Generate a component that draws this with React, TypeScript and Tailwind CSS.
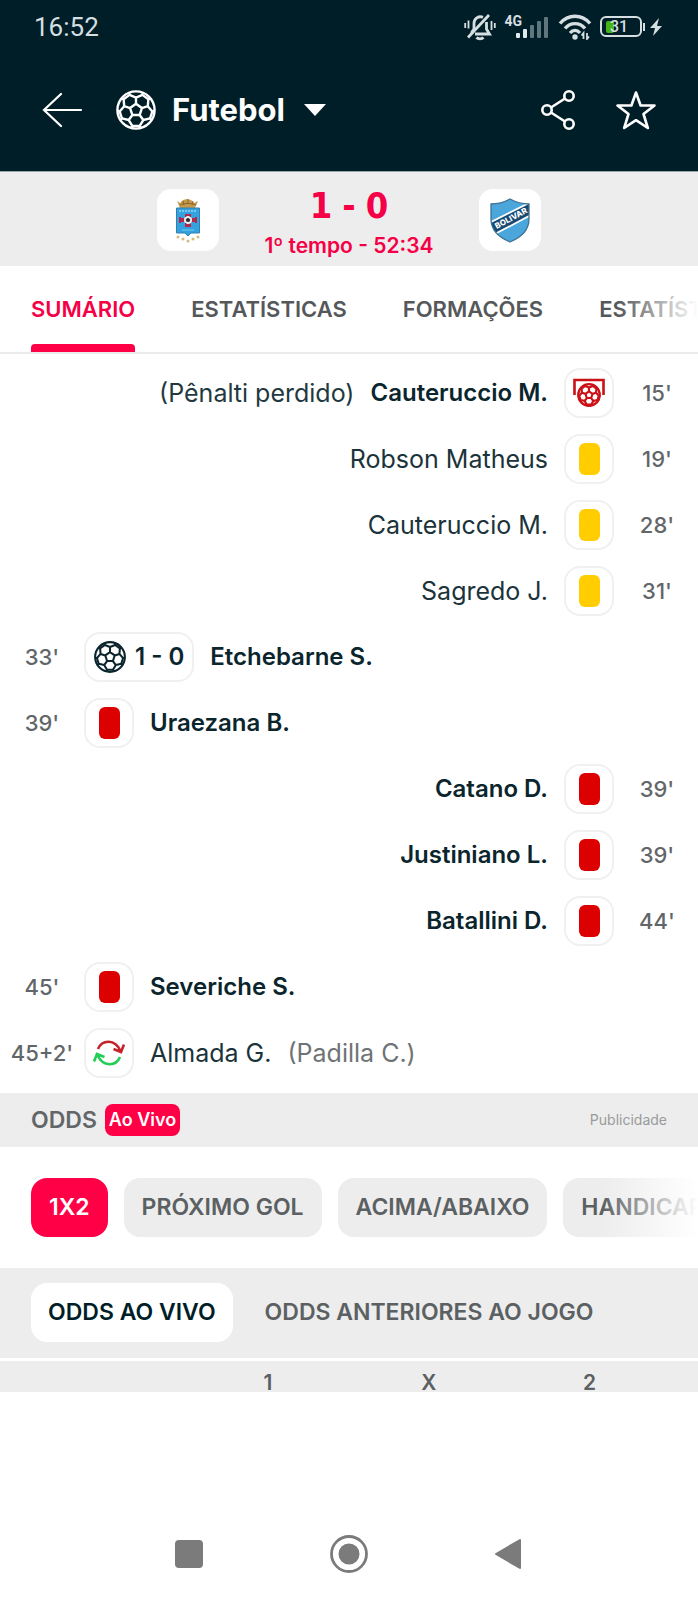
import type { ReactNode } from "react";

function point(radius: number, degrees: number): string {
  const a = (degrees * Math.PI) / 180;
  return `${(20 + radius * Math.cos(a)).toFixed(2)} ${(20 + radius * Math.sin(a)).toFixed(2)}`;
}

const ballAngles = [-90, -18, 54, 126, 198];
const ballPath = [
  `M${ballAngles.map((a) => point(6.2, a)).join("L")}Z`,
  ...ballAngles.map((a) => `M${point(6.2, a)}L${point(12.4, a)}`),
  ...ballAngles.map(
    (a) => `M${point(18.6, a - 21)}L${point(16.4, a - 23)}L${point(12.4, a)}L${point(16.4, a + 23)}L${point(18.6, a + 21)}`,
  ),
  ...ballAngles.map((a) => `M${point(16.4, a + 23)}L${point(16.4, a + 49)}`),
].join("");

function Ball({ className, stroke }: { className: string; stroke: number }) {
  return (
    <svg viewBox="0 0 40 40" className={className} fill="none" stroke="currentColor" strokeWidth={stroke} aria-hidden="true">
      <circle cx="20" cy="20" r="18.6" />
      <path d={ballPath} strokeLinejoin="round" />
    </svg>
  );
}

function StatusBar() {
  return (
    <div className="flex h-[53px] items-center justify-between pl-[34px] pr-9 text-[#d5dee0]">
      <time className="font-['Roboto'] text-[26px] leading-8">16:52</time>
      <div className="flex items-center gap-2">
        <svg viewBox="0 0 32 28" className="h-7 w-8" fill="none" stroke="currentColor" strokeWidth="2.8" aria-label="Silencioso">
          <path d="M8 20.500V19l2-3V10.500A6.500 6.500 0 0 1 19 4.300M22.500 9V16l3 5H11" />
          <path d="M4 24.500 25 2" />
          <path d="M12.500 24.500a4 2.500 0 0 0 7 0" />
          <path d="M1.200 10v5M4.500 7.500v8M27.500 8v9M30.800 10v5" strokeWidth="1.800" />
        </svg>
        <div className="flex items-end">
          <span className="self-start font-['Roboto'] text-[14px] font-bold leading-3">4G</span>
          <svg viewBox="0 0 36 24" className="-ml-2 h-6 w-9" aria-label="Sinal">
            <rect x="2" y="18" width="4" height="5" rx="1" fill="#e3eaec" />
            <rect x="9" y="14" width="4" height="9" rx="1" fill="#e3eaec" />
            <g fill="#60757c">
              <rect x="16" y="10" width="4" height="13" rx="1" />
              <rect x="23" y="6" width="4" height="17" rx="1" />
              <rect x="30" y="2" width="4" height="21" rx="1" />
            </g>
          </svg>
        </div>
        <svg viewBox="0 0 34 26" className="h-[26px] w-[34px]" fill="none" stroke="currentColor" strokeWidth="3.4" aria-label="Wi-Fi">
          <path d="M2 9.500C10-.200 24-.200 32 9.500M7 14.500c5.500-6.500 14.500-6.500 20 0M12 19c3-3.500 7-3.500 10 0" />
          <circle cx="17" cy="23" r="2.700" fill="currentColor" stroke="none" />
          <path d="M25.500 25v-6l-2 2.500M29 19v6l2-2.500" strokeWidth="1.800" />
        </svg>
        <div className="flex items-center gap-px">
          <div className="flex h-[21px] w-[42px] items-center rounded-[6px] border-2 border-current px-1">
            <span className="h-3 w-2 rounded-[2px] bg-[#43b517]" />
            <span className="-ml-1 font-['Roboto'] text-[16px] font-medium leading-4">31</span>
          </div>
          <span className="h-2 w-[2px] bg-current" />
          <svg viewBox="0 0 12 20" className="ml-1 h-5 w-3" fill="currentColor" aria-hidden="true">
            <path d="M9 1 0 11h5L3 19l9-10H7z" />
          </svg>
        </div>
      </div>
    </div>
  );
}

function AppBar() {
  return (
    <div className="flex items-center justify-between px-[42px] pb-[41px] pt-[37px] text-white">
      <div className="flex items-center">
        <button aria-label="Voltar">
          <svg viewBox="0 0 40 40" className="h-10 w-10" fill="none" stroke="currentColor" strokeWidth="2.2" strokeLinecap="round">
            <path d="M19 4 2 20l17 16M2 20h37" />
          </svg>
        </button>
        <button className="ml-[34px] flex items-center">
          <Ball className="h-10 w-10" stroke={2.4} />
          <span className="ml-4 font-['Inter'] text-[31px] font-bold leading-10">Futebol</span>
          <svg viewBox="0 0 24 12" className="ml-[18px] h-3 w-6" fill="currentColor" aria-hidden="true">
            <path d="M1 0h22L12 12z" />
          </svg>
        </button>
      </div>
      <div className="flex items-center gap-[41px]">
        <button aria-label="Compartilhar">
          <svg viewBox="0 0 34 40" className="h-10 w-[34px]" fill="none" stroke="currentColor" strokeWidth="2.6">
            <circle cx="6" cy="20" r="4.700" />
            <circle cx="28" cy="6" r="4.700" />
            <circle cx="28" cy="34" r="4.700" />
            <path d="M10 17.500 24 8.500M10 22.500 24 31.500" />
          </svg>
        </button>
        <button aria-label="Favorito">
          <svg viewBox="0 0 40 40" className="h-10 w-10" fill="none" stroke="currentColor" strokeWidth="2.6" strokeLinejoin="round">
            <path d="M20 2.500l4.600 13h13.900L27.500 24l4.300 14L20 30.200 8.200 38l4.300-14L1.500 15.500h13.900z" />
          </svg>
        </button>
      </div>
    </div>
  );
}

function HomeCrest() {
  return (
    <svg viewBox="0 0 62 62" className="h-[62px] w-[62px]" role="img" aria-label="Time da casa">
      <path d="M20 12l3 2 3-3 4-1 4 1 3 3 4-2-3 7H23z" fill="#c79a4b" />
      <path d="M23 16c4-2 12-2 16 0M26 12l1 4M31 10v5M36 12l-1 4" stroke="#8c642a" strokeWidth="1" fill="none" />
      <path d="M19.500 19h23v25h-8.500l-3 3-3-3h-8.500z" fill="#32a3df" stroke="#337fae" strokeWidth="1" />
      <path d="M22 22h18" stroke="#7cc8ee" strokeWidth="2" strokeDasharray="2 1" />
      <path d="M28 25h6v4h4v-1h2v6h-2v-1h-4v5h-6v-5h-4v1h-2v-6h2v1h4z" fill="#b5284b" />
      <circle cx="31" cy="31" r="4" fill="#f4f4f4" />
      <path d="M31 29l2 1.500-.700 2h-2.600L29 30.500zM28 28l1.500-1M34 28l-1.500-1M28 34l1.500 1" fill="#202a3a" stroke="#202a3a" strokeWidth=".7" />
      <path d="M25 41h12" stroke="#7cc8ee" strokeWidth="1" />
      <g fill="#d4bb7c">
        <circle cx="21" cy="48" r="1.500" />
        <circle cx="26" cy="50" r="1.500" />
        <circle cx="31" cy="52" r="1.500" />
        <circle cx="36" cy="50" r="1.500" />
        <circle cx="41" cy="48" r="1.500" />
      </g>
    </svg>
  );
}

function AwayCrest() {
  return (
    <svg viewBox="0 0 62 62" className="h-[62px] w-[62px]" role="img" aria-label="Bolívar">
      <defs>
        <clipPath id="shield">
          <path d="M12 15q10 0 19-5 9 5 19 5v15c0 11-7 18-19 23-12-5-19-12-19-23z" />
        </clipPath>
      </defs>
      <g clipPath="url(#shield)">
        <rect width="62" height="62" fill="#4ba6dc" />
        <path d="M8 34 54 11v15L14 47z" fill="#fff" />
        <path d="M8 36 54 13v11L14 45z" fill="#174a73" />
      </g>
      <path d="M12 15q10 0 19-5 9 5 19 5v15c0 11-7 18-19 23-12-5-19-12-19-23z" fill="none" stroke="#3f7192" strokeWidth="1.300" />
      <text x="32" y="32" textAnchor="middle" transform="rotate(-28 32 29)" className="font-['Inter'] text-[8px] font-extrabold" fill="#fff">
        BOLIVAR
      </text>
    </svg>
  );
}

function Scoreboard() {
  return (
    <section className="flex items-start justify-center border-t border-[#9aa5a9] bg-[#ededed] pb-[10px] pt-[17px]">
      <div className="rounded-[14px] bg-white">
        <HomeCrest />
      </div>
      <div className="flex w-[260px] flex-col items-center pt-px text-[#f50046]">
        <div className="flex gap-1 font-['DejaVu_Sans_Condensed','DejaVu_Sans'] text-[36px] font-bold leading-8">
          <span className="w-6 text-center">1</span>
          <span className="w-6 text-center">-</span>
          <span className="w-6 text-center">0</span>
        </div>
        <p className="mt-[14px] font-['Inter'] text-[21px] font-semibold leading-5">1º tempo - 52:34</p>
      </div>
      <div className="rounded-[14px] bg-white">
        <AwayCrest />
      </div>
    </section>
  );
}

function Tabs() {
  return (
    <nav className="relative flex gap-14 overflow-hidden whitespace-nowrap border-b-2 border-[#ebebeb] px-[31px] font-['Inter'] text-[22px] font-semibold leading-7 text-[#55585a]">
      <a href="#sumario" aria-current="page" className="shrink-0 pt-[29px] text-[#f50046]">
        SUMÁRIO
        <span className="mt-[21px] block h-2 rounded-t-[4px] bg-[#ff0046]" />
      </a>
      <a href="#estatisticas" className="shrink-0 pt-[29px]">ESTATÍSTICAS</a>
      <a href="#formacoes" className="shrink-0 pt-[29px]">FORMAÇÕES</a>
      <a href="#jogadores" className="shrink-0 pt-[29px]">ESTATÍSTICAS</a>
      <span className="pointer-events-none absolute inset-y-0 right-0 w-20 bg-linear-to-r from-white/0 to-white" />
    </nav>
  );
}

type Kind = "missed" | "yellow" | "red" | "goal" | "sub";

function EventIcon({ kind }: { kind: Kind }) {
  let content: ReactNode;
  if (kind === "yellow") content = <span className="h-8 w-[21px] rounded-[6px] bg-[#ffcd00]" />;
  else if (kind === "red") content = <span className="h-8 w-[21px] rounded-[6px] bg-[#dc0000]" />;
  else if (kind === "goal")
    content = (
      <>
        <Ball className="h-8 w-8" stroke={2.6} />
        <span className="text-[24px] font-semibold leading-8">1 - 0</span>
      </>
    );
  else if (kind === "missed")
    content = (
      <svg viewBox="0 0 32 30" className="h-[30px] w-8 text-[#cb1016]" fill="none" stroke="currentColor" aria-label="Pênalti perdido">
        <path d="M1.500 17V2h29v15" strokeWidth="2.600" />
        <svg x="4" y="5" width="24" height="24" viewBox="0 0 40 40" strokeWidth="3.600">
          <circle cx="20" cy="20" r="18" />
          <path d={ballPath} />
        </svg>
      </svg>
    );
  else
    content = (
      <svg viewBox="0 0 32 32" className="h-8 w-8" fill="none" strokeWidth="2.6" aria-label="Substituição">
        <path d="M5 12C9 2.500 22 1.500 27.500 14M20.500 12l7.500 3 3-7.500" stroke="#c52328" />
        <path d="M27 20C23 29.500 10 30.500 4.500 18M11.500 20 4 17l-3 7.500" stroke="#22ce55" />
      </svg>
    );
  return (
    <span
      className={
        kind === "goal"
          ? "flex h-[50px] items-center gap-[9px] rounded-[16px] border-2 border-[#f0f0f0] px-2"
          : "flex h-[50px] w-[50px] items-center justify-center rounded-[16px] border-2 border-[#f0f0f0]"
      }
    >
      {content}
    </span>
  );
}

interface MatchEvent {
  side: "home" | "away";
  minute: string;
  kind: Kind;
  name: string;
  note?: string;
}

const events: MatchEvent[] = [
  { side: "away", minute: "15'", kind: "missed", name: "Cauteruccio M.", note: "(Pênalti perdido)" },
  { side: "away", minute: "19'", kind: "yellow", name: "Robson Matheus" },
  { side: "away", minute: "28'", kind: "yellow", name: "Cauteruccio M." },
  { side: "away", minute: "31'", kind: "yellow", name: "Sagredo J." },
  { side: "home", minute: "33'", kind: "goal", name: "Etchebarne S." },
  { side: "home", minute: "39'", kind: "red", name: "Uraezana B." },
  { side: "away", minute: "39'", kind: "red", name: "Catano D." },
  { side: "away", minute: "39'", kind: "red", name: "Justiniano L." },
  { side: "away", minute: "44'", kind: "red", name: "Batallini D." },
  { side: "home", minute: "45'", kind: "red", name: "Severiche S." },
  { side: "home", minute: "45+2'", kind: "sub", name: "Almada G.", note: "(Padilla C.)" },
];

function EventRow({ event }: { event: MatchEvent }) {
  const light = event.kind === "yellow" || event.kind === "sub";
  const home = event.side === "home";
  return (
    <li className={home ? "flex items-center" : "flex flex-row-reverse items-center"}>
      <span
        className={
          home
            ? "w-[84px] shrink-0 text-center text-[22px] font-medium leading-7 text-[#626668]"
            : "w-[84px] shrink-0 pl-[2px] text-center text-[22px] font-medium leading-7 text-[#626668]"
        }
      >
        {event.minute}
      </span>
      <EventIcon kind={event.kind} />
      <span className={home ? "ml-4 flex items-center gap-4" : "mr-4 flex flex-row-reverse items-center gap-4"}>
        <span className={light ? "text-[25px] leading-8 text-[#1b333a]" : "text-[24px] font-semibold leading-8"}>{event.name}</span>
        {event.note && (
          <span className={home ? "text-[25px] leading-8 text-[#6f7375]" : "text-[25px] leading-8 text-[#23393f]"}>{event.note}</span>
        )}
      </span>
    </li>
  );
}

function Odds() {
  return (
    <section>
      <div className="flex items-center justify-between bg-[#ededed] px-[31px] py-[11px]">
        <div className="flex items-center gap-2">
          <h2 className="text-[23px] font-semibold leading-8 text-[#626668]">ODDS</h2>
          <span className="rounded-[8px] bg-[#ff0046] px-1 text-[18px] font-semibold leading-8 text-white">Ao Vivo</span>
        </div>
        <span className="text-[14px] leading-5 text-[#999b9c]">Publicidade</span>
      </div>
      <div className="relative flex gap-4 overflow-hidden whitespace-nowrap px-[31px] py-[31px] text-[23px] font-semibold leading-[27px] text-[#5b6062]">
        <button className="shrink-0 rounded-[16px] bg-[#ff0046] px-[18px] py-4 text-white">1X2</button>
        <button className="shrink-0 rounded-[16px] bg-[#ededed] px-[18px] py-4">PRÓXIMO GOL</button>
        <button className="shrink-0 rounded-[16px] bg-[#ededed] px-[18px] py-4">ACIMA/ABAIXO</button>
        <button className="shrink-0 rounded-[16px] bg-[#ededed] px-[18px] py-4">HANDICAP</button>
        <span className="pointer-events-none absolute inset-y-0 right-0 w-24 bg-linear-to-r from-white/0 to-white" />
      </div>
      <div className="flex gap-[15px] whitespace-nowrap border-b-3 border-white bg-[#ededed] px-[31px] pb-4 pt-[15px] text-[23px] font-semibold leading-[27px] text-[#5b6062]">
        <button className="rounded-[16px] bg-white px-[17px] py-4 text-[#001e28]">ODDS AO VIVO</button>
        <button className="px-[17px] py-4">ODDS ANTERIORES AO JOGO</button>
      </div>
      <div className="h-[31px] overflow-hidden bg-[#ededed] pr-7">
        <table className="w-full table-fixed text-[21px] text-[#5b6062]">
          <thead>
            <tr className="leading-5">
              <th className="w-[28%]" aria-label="Casa de apostas" />
              <th className="pt-3 pb-0 font-semibold">1</th>
              <th className="pt-3 pb-0 font-semibold">X</th>
              <th className="pt-3 pb-0 font-semibold">2</th>
            </tr>
          </thead>
        </table>
      </div>
    </section>
  );
}

function SystemNav() {
  return (
    <nav className="mt-auto flex h-[92px] items-center justify-center gap-[127px] text-[#7b7b7b]" aria-label="Sistema">
      <button aria-label="Recentes">
        <svg viewBox="0 0 28 28" className="h-7 w-7" fill="currentColor">
          <rect width="28" height="28" rx="4" />
        </svg>
      </button>
      <button aria-label="Início">
        <svg viewBox="0 0 38 38" className="h-[38px] w-[38px]">
          <circle cx="19" cy="19" r="17.500" fill="none" stroke="currentColor" strokeWidth="2.800" />
          <circle cx="19" cy="19" r="10.500" fill="currentColor" />
        </svg>
      </button>
      <button aria-label="Voltar ao anterior">
        <svg viewBox="0 0 28 32" className="h-8 w-7" fill="currentColor" stroke="currentColor" strokeWidth="2" strokeLinejoin="round">
          <path d="M25 2v28L1 16z" />
        </svg>
      </button>
    </nav>
  );
}

export default function App() {
  return (
    <div className="flex min-h-screen flex-col bg-white font-['Inter',sans-serif] text-[#0b252d]">
      <header className="bg-[#001e28]">
        <StatusBar />
        <AppBar />
      </header>
      <Scoreboard />
      <Tabs />
      <ul className="flex flex-col gap-4 pb-[15px] pt-[14px]">
        {events.map((event) => (
          <EventRow key={`${event.minute}${event.name}`} event={event} />
        ))}
      </ul>
      <Odds />
      <SystemNav />
    </div>
  );
}
